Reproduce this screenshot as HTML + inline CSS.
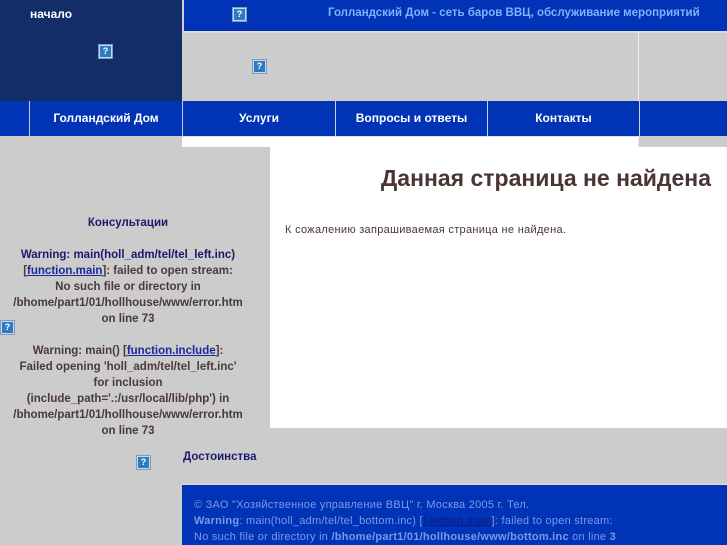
<!DOCTYPE html>
<html><head><meta charset="utf-8"><style>
*{margin:0;padding:0;box-sizing:border-box}
body{width:727px;height:545px;overflow:hidden;background:#cccccc;font-family:"Liberation Sans","DejaVu Sans",sans-serif;position:relative}
.a{position:absolute}
.ic{position:absolute;width:13px;height:13px;background:#2c7bc4;border:1px solid #c9d6e8;outline:1px solid #7f9cc0;color:#fff;font-size:9px;font-weight:bold;line-height:11px;text-align:center}
.nav{position:absolute;top:101px;height:35px;background:#0033b5;color:#fff;font-size:12px;font-weight:bold;text-align:center;line-height:34px;border-left:1px solid #c8cde0}
.l{font-size:11.5px;font-weight:bold;color:#4a3a3a;text-align:center;line-height:16px}
.l a{color:#1a2a9a}
.n{color:#1a1a6e}
</style></head><body>
<div class="a" style="left:0;top:0;width:182px;height:101px;background:#132d68"></div>
<div class="a" style="left:30px;top:7px;color:#fff;font-size:12px;font-weight:bold">начало</div>
<div class="a" style="left:182px;top:0;width:545px;height:31px;background:#0033b5;border-left:2px solid #c8cde0"></div>
<div class="a" style="left:182px;top:31px;width:545px;height:2px;background:#d8dce8"></div>
<div class="a" style="left:328px;top:7px;color:#7fb2ff;font-size:11.5px;font-weight:bold">Голландский Дом - сеть баров ВВЦ, обслуживание мероприятий</div>
<div class="a" style="left:638px;top:32px;width:1px;height:115px;background:#eee"></div>
<div class="nav" style="left:0;width:30px;border-left:none"></div>
<div class="nav" style="left:29px;width:153px">Голландский Дом</div>
<div class="nav" style="left:182px;width:153px">Услуги</div>
<div class="nav" style="left:335px;width:152px">Вопросы и ответы</div>
<div class="nav" style="left:487px;width:152px">Контакты</div>
<div class="nav" style="left:639px;width:88px"></div>
<div class="a" style="left:182px;top:136px;width:456px;height:11px;background:#fff;border-top:1px solid #dde"></div>
<div class="a" style="left:182px;top:137px;width:88px;height:10px;background:#fff"></div>
<div class="a" style="left:270px;top:147px;width:457px;height:281px;background:#fff"></div>
<div class="a" style="left:270px;top:165px;width:441px;text-align:right;font-size:23px;font-weight:bold;color:#4a3434">Данная страница не найдена</div>
<div class="a" style="left:285px;top:224px;font-size:11px;color:#4a3434;letter-spacing:0.3px">К сожалению запрашиваемая страница не найдена.</div>
<div class="a l" style="left:0;top:215px;width:256px"><span class="n">Консультации</span><br><br><span class="n">Warning: main(holl_adm/tel/tel_left.inc)</span><br>[<a href="#">function.main</a>]: failed to open stream:<br>No such file or directory in<br>/bhome/part1/01/hollhouse/www/error.htm<br>on line 73<br><br>Warning: main() [<a href="#">function.include</a>]:<br>Failed opening 'holl_adm/tel/tel_left.inc'<br>for inclusion<br>(include_path='.:/usr/local/lib/php') in<br>/bhome/part1/01/hollhouse/www/error.htm<br>on line 73</div>
<div class="a" style="left:183px;top:451px;font-size:11.5px;font-weight:bold;color:#1a1a6e">Достоинства</div>
<div class="a" style="left:182px;top:484px;width:545px;height:61px;background:#0033b5;border-top:1px solid #dde"></div>
<div class="a" style="left:194px;top:497px;font-size:11px;line-height:16px;color:#7a9ae8;letter-spacing:0.25px">© ЗАО "Хозяйственное управление ВВЦ" г. Москва 2005 г. Тел.<br><b>Warning</b>: main(holl_adm/tel/tel_bottom.inc) [<u style="color:#0a1a80">function.main</u>]: failed to open stream:<br>No such file or directory in <b>/bhome/part1/01/hollhouse/www/bottom.inc</b> on line <b>3</b></div>
<div class="ic" style="left:233px;top:8px">?</div>
<div class="ic" style="left:99px;top:45px">?</div>
<div class="ic" style="left:253px;top:60px">?</div>
<div class="ic" style="left:1px;top:321px">?</div>
<div class="ic" style="left:137px;top:456px">?</div>
</body></html>
